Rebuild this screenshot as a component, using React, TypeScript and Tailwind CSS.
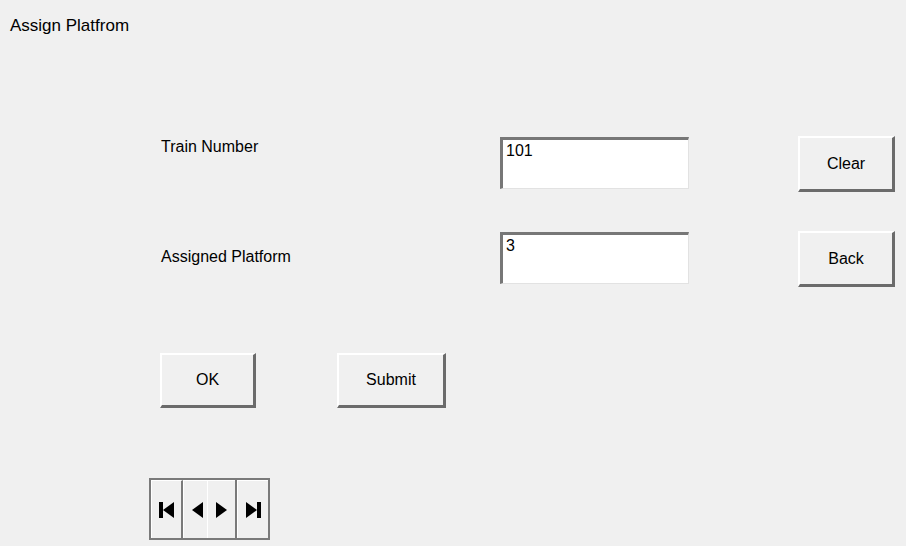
import { useState } from "react";

const font = { fontFamily: '"Liberation Sans", Arial, sans-serif' };

const WinButton = ({ label, className }: { label: string; className: string }) => (
  <button
    className={`flex items-center justify-center bg-[#f0f0f0] border-t-2 border-l-2 border-b-[3px] border-r-[3px] border-t-white border-l-white border-b-[#6b6b6b] border-r-[#6b6b6b] text-[16px] leading-5 text-black ${className}`}
  >
    {label}
  </button>
);

const TextBox = ({ value, onChange }: { value: string; onChange: (v: string) => void }) => (
  <input
    value={value}
    onChange={(e) => onChange(e.target.value)}
    className="w-[189px] h-[52px] bg-white border-t-[3px] border-l-[3px] border-r border-b border-t-[#777777] border-l-[#777777] border-r-[#e2e2e2] border-b-[#e2e2e2] pl-[3px] pb-[26px] text-[16px] leading-5 text-black outline-none"
  />
);

const Triangle = ({ dir }: { dir: "left" | "right" }) => (
  <svg width="11" height="16" viewBox="0 0 11 16">
    {dir === "left" ? <polygon points="11,0 0,8 11,16" fill="#000" /> : <polygon points="0,0 11,8 0,16" fill="#000" />}
  </svg>
);

const App = () => {
  const [train, setTrain] = useState("101");
  const [platform, setPlatform] = useState("3");

  return (
    <div className="w-[906px] h-[546px] bg-[#f0f0f0] overflow-hidden" style={font}>
      <div className="pt-4 pl-[10px] text-[17px] leading-5 text-black">Assign Platfrom</div>

      <div className="flex items-start mt-[100px] pl-[161px]">
        <div className="w-[339px] mt-[1px] text-[16px] leading-5 text-black">Train Number</div>
        <div className="mt-[1px]">
          <TextBox value={train} onChange={setTrain} />
        </div>
        <WinButton label="Clear" className="ml-[109px] w-[97px] h-[56px]" />
      </div>

      <div className="flex items-start mt-[39px] pl-[161px]">
        <div className="w-[339px] mt-[16px] text-[16px] leading-5 text-black">Assigned Platform</div>
        <div className="mt-[1px]">
          <TextBox value={platform} onChange={setPlatform} />
        </div>
        <WinButton label="Back" className="ml-[109px] w-[97px] h-[56px]" />
      </div>

      <div className="flex items-start mt-[66px] pl-[160px]">
        <WinButton label="OK" className="w-[96px] h-[55px]" />
        <WinButton label="Submit" className="ml-[81px] w-[109px] h-[55px]" />
      </div>

      <div className="mt-[70px] ml-[149px] flex w-[121px] h-[62px] border-2 border-[#7a7a7a] bg-[#f0f0f0]">
        <div className="flex items-center justify-center w-[32px] border-r-2 border-[#7a7a7a] border-l border-t border-l-white border-t-white">
          <div className="w-[4px] h-[16px] bg-black" />
          <Triangle dir="left" />
        </div>
        <div className="flex w-[54px] border-r-2 border-[#7a7a7a] border-l-white">
          <div className="flex flex-1 items-center justify-end pr-[4px] border-l border-t border-l-white border-t-white border-r border-r-[#ffffff]">
            <Triangle dir="left" />
          </div>
          <div className="flex flex-1 items-center justify-start pl-[8px] border-t border-t-white">
            <Triangle dir="right" />
          </div>
        </div>
        <div className="flex flex-1 items-center justify-center border-l border-t border-l-white border-t-white">
          <Triangle dir="right" />
          <div className="w-[4px] h-[16px] bg-black" />
        </div>
      </div>
    </div>
  );
};

export default App;
